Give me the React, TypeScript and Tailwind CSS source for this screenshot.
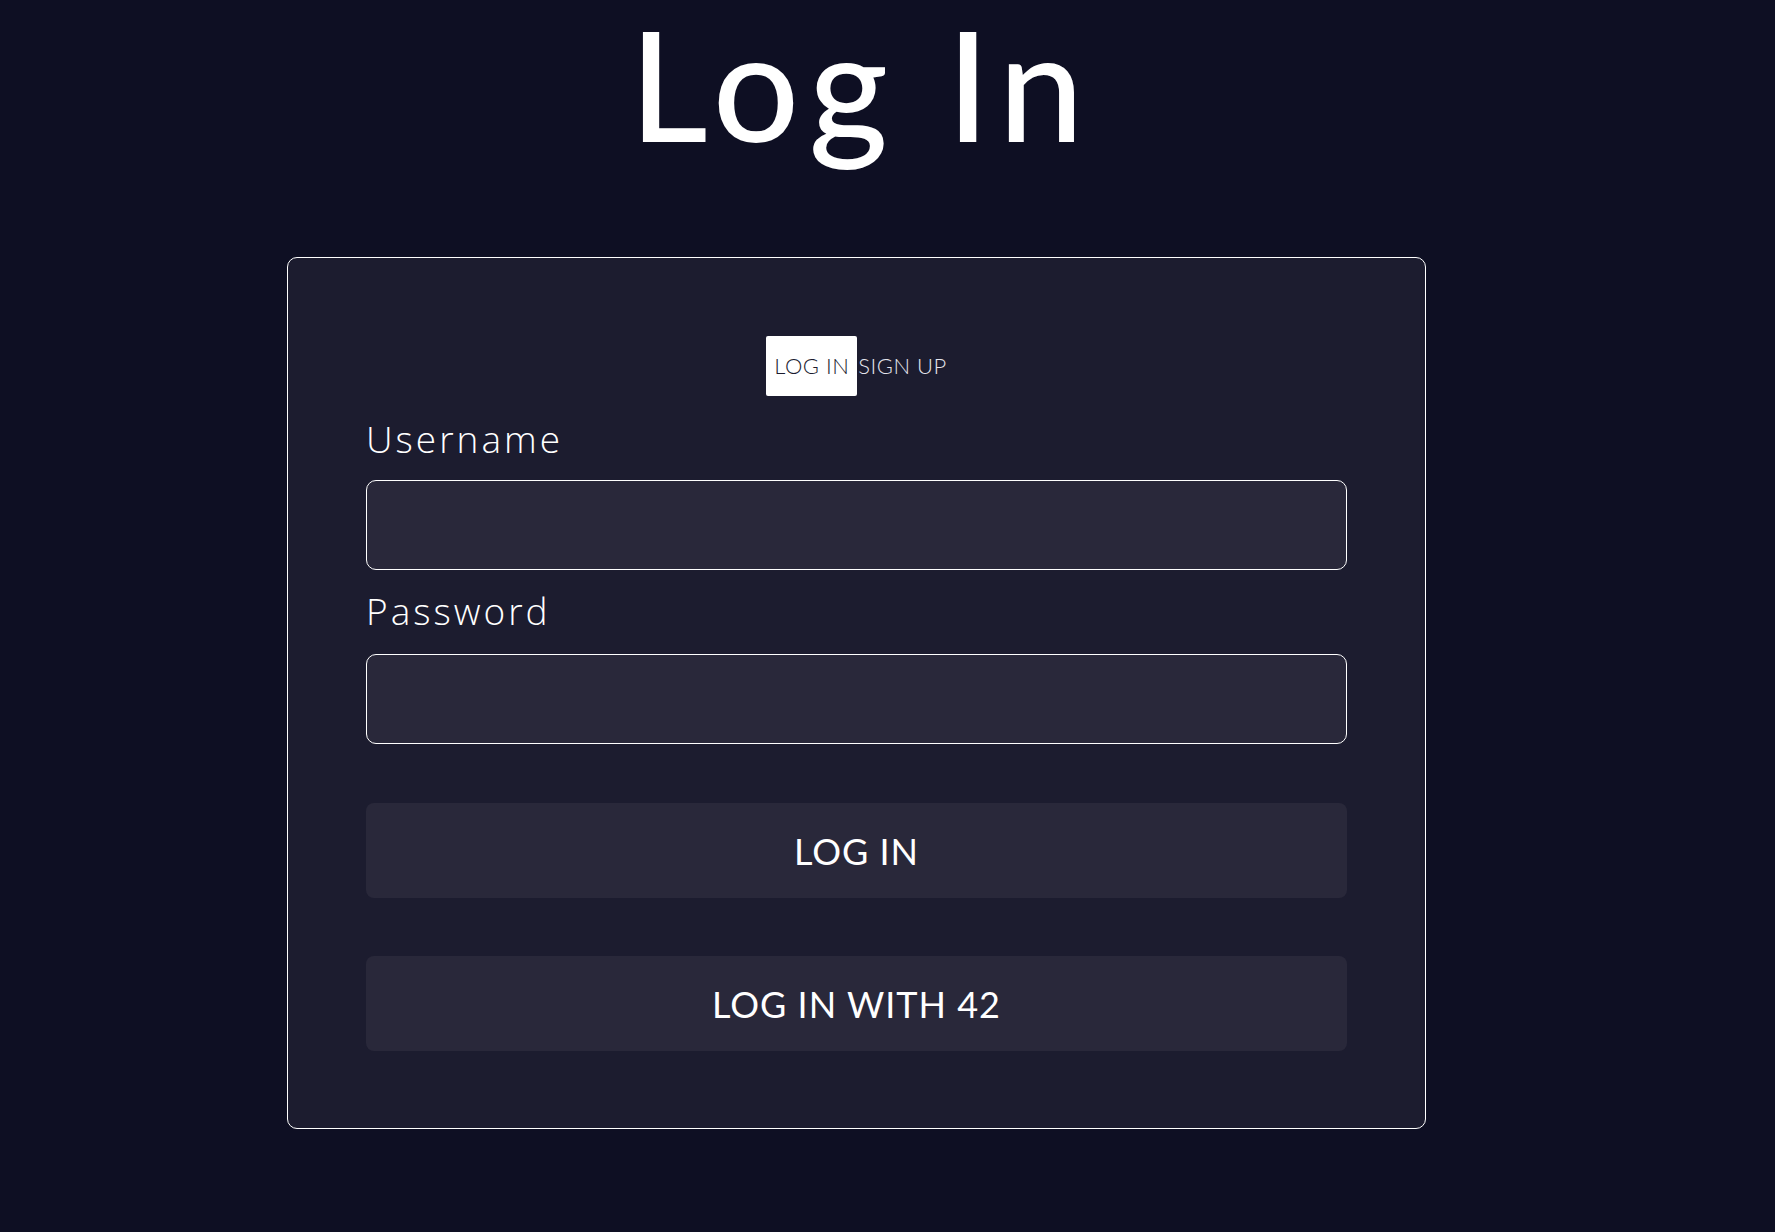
import React from "react";

export default function App() {
  const lato = { fontFamily: '"Lato", "Open Sans", sans-serif' };
  const open = { fontFamily: '"Open Sans", "Lato", sans-serif' };
  return (
    <div className="min-h-screen w-full bg-[#0e0f23]" style={lato}>
      <div className="w-[1713px] flex flex-col items-center pb-[103px]">
        <h1 className="mt-0 pb-[12px] pl-[10px] text-[152px] leading-[1.1] font-medium text-white tracking-[10px]">
          Log In
        </h1>
        <div className="mt-[78px] w-[1139px] rounded-[10px] border border-white bg-[#1c1c2f] px-[78px] pt-[78px] pb-[77px]">
          <div className="flex h-[60px] items-center justify-center">
            <button className="h-[60px] rounded-[2px] bg-white px-[8px] text-[22px] font-light leading-none tracking-[0.5px] text-[#1c1c2f]">
              LOG IN
            </button>
            <button className="h-[60px] pl-[1px] text-[22px] font-light leading-none tracking-[0.5px] text-[#e4e4ec]">
              SIGN UP
            </button>
          </div>
          <label style={open} className="mt-[24px] block text-[37px] font-light leading-none tracking-[3px] text-white">
            Username
          </label>
          <input
            type="text"
            className="mt-[23px] block h-[90px] w-full rounded-[10px] border border-white bg-[#29283a] px-4 text-[28px] text-white outline-none"
          />
          <label style={open} className="mt-[22px] block text-[37px] font-light leading-none tracking-[3px] text-white">
            Password
          </label>
          <input
            type="password"
            className="mt-[25px] block h-[90px] w-full rounded-[10px] border border-white bg-[#29283a] px-4 text-[28px] text-white outline-none"
          />
          <button className="mt-[59px] flex h-[95px] w-full items-center justify-center rounded-[8px] bg-[#29283a] text-[36px] leading-none tracking-[1px] text-white">
            LOG IN
          </button>
          <button className="mt-[58px] flex h-[95px] w-full items-center justify-center rounded-[8px] bg-[#29283a] text-[36px] leading-none tracking-[1px] text-white">
            LOG IN WITH 42
          </button>
        </div>
      </div>
    </div>
  );
}
